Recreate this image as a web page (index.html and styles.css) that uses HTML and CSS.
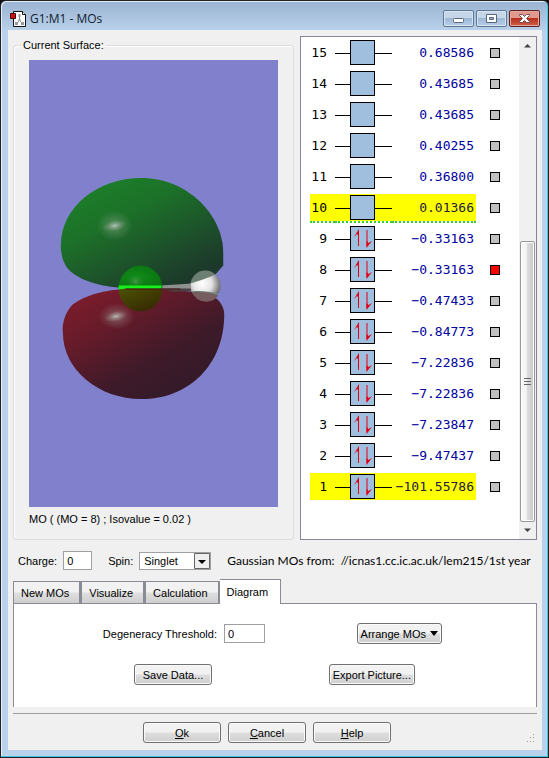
FILE: index.html
```html
<!DOCTYPE html>
<html lang="en">
<head>
    <meta charset="UTF-8">
    <meta name="viewport" content="width=device-width, initial-scale=1.0">
    <title>G1:M1 - MOs</title>
    <link rel="stylesheet" href="styles.css">
</head>
<body>
    <div class="window">
        <header class="titlebar">
            <svg class="app-icon" width="16" height="16" viewBox="0 0 16 16">
                <path d="M3.5 .5h9l3 3v12h-12z" fill="#fff" stroke="#111"/>
                <path d="M12.5 .5v3h3" fill="#fff" stroke="#111"/>
                <path d="M9.500 4v5l-3 4M9.500 9l3 4" fill="none" stroke="#888" stroke-width="1"/>
                <path d="M8.500 3h2v3h-2zM8.500 8h2v2h-2zM5 11h3v3H5zM11 11h3v3h-3z" fill="#999"/>
                <path d="M.5 2.500h5v5h-5z" fill="#d01010" stroke="#400"/>
            </svg>
            <h1>G1:M1 - MOs</h1>
            <div class="window-buttons">
                <button type="button" aria-label="Minimize">
                    <svg width="13" height="13" viewBox="0 0 13 13"><rect x="1.500" y="6.500" width="10" height="4" rx="1" fill="#fff" stroke="#5a6678"/></svg>
                </button>
                <button type="button" aria-label="Maximize">
                    <svg width="13" height="13" viewBox="0 0 13 13"><path fill-rule="evenodd" d="M1.500 2.500h10v8h-10zM4.500 5.500v2h4v-2z" fill="#fff" stroke="#5a6678"/></svg>
                </button>
                <button type="button" class="close" aria-label="Close">
                    <svg width="13" height="13" viewBox="0 0 13 13"><path d="M1.500 2.500h3l2 2 2-2h3v1l-3 3 3 3v1h-3l-2-2-2 2h-3v-1l3-3-3-3z" fill="#fff" stroke="#6d4a55"/></svg>
                </button>
            </div>
        </header>

        <main class="client">
            <div class="main-row">
                <fieldset class="surface">
                    <legend>Current Surface:</legend>
                    <svg class="molecule" viewBox="0 0 250 446" role="img" aria-label="Molecular orbital surface">
                        <defs>
                            <linearGradient id="greenLobe" x1="0.1" y1="0.1" x2="0.75" y2="0.95">
                                <stop offset="0" stop-color="#1c8029"/>
                                <stop offset="0.35" stop-color="#1c7028"/>
                                <stop offset="0.75" stop-color="#1d4d2b"/>
                                <stop offset="1" stop-color="#1c382a"/>
                            </linearGradient>
                            <linearGradient id="redLobe" x1="0.05" y1="0.1" x2="0.7" y2="0.85">
                                <stop offset="0" stop-color="#7c1c2b"/>
                                <stop offset="0.3" stop-color="#681b2a"/>
                                <stop offset="0.75" stop-color="#3f1a29"/>
                                <stop offset="1" stop-color="#361a29"/>
                            </linearGradient>
                            <radialGradient id="shine">
                                <stop offset="0" stop-color="#c4d0c8" stop-opacity="0.75"/>
                                <stop offset="0.4" stop-color="#b0b8b0" stop-opacity="0.35"/>
                                <stop offset="1" stop-color="#b0b8b0" stop-opacity="0"/>
                            </radialGradient>
                            <radialGradient id="hydrogen" gradientUnits="userSpaceOnUse" cx="174" cy="223" r="19">
                                <stop offset="0" stop-color="#fff"/>
                                <stop offset="0.5" stop-color="#e4e4e4"/>
                                <stop offset="1" stop-color="#666"/>
                            </radialGradient>
                            <radialGradient id="atomTop" cx="0.4" cy="0.5" r="0.7">
                                <stop offset="0" stop-color="#128c1a"/>
                                <stop offset="1" stop-color="#08700f"/>
                            </radialGradient>
                            <linearGradient id="atomBottom" x1="0" y1="0" x2="0.8" y2="1">
                                <stop offset="0" stop-color="#4c5205"/>
                                <stop offset="1" stop-color="#352702"/>
                            </linearGradient>
                        </defs>
                        <path fill="url(#greenLobe)" d="M32 184C32 147 68 117 113 117C160 117 195 155 195 192V205L188 213C176 223 150 228 91 227C66 226 46 217 38 207C33 199 32 192 32 184z"/>
                        <ellipse cx="86" cy="165" rx="18" ry="15" fill="url(#shine)" opacity="0.7"/>
                        <ellipse cx="86" cy="165" rx="12" ry="5" fill="url(#shine)" transform="rotate(-12 86 165)"/>
                        <path fill="url(#redLobe)" d="M34 272C33 262 37 252 42 246C52 236 75 230 91 229H144C165 231 180 234 188 238C193 242 196 248 196 254C196 305 160 339 113 339C70 339 34 310 34 272z"/>
                        <ellipse cx="88" cy="256" rx="18" ry="13" fill="url(#shine)" opacity="0.7"/>
                        <ellipse cx="87" cy="256" rx="12" ry="5" fill="url(#shine)" transform="rotate(-12 87 256)"/>
                        <path d="M132 225L164 223V229L132 228z" fill="#8f918f"/>
                        <path d="M132 228L164 228V231H144z" fill="#4c4045"/>
                        <circle cx="177" cy="225" r="15" fill="#6d7f73"/>
                        <path d="M164 232A15 15 0 0 0 190 235C180 232 172 231 164 232z" fill="#755d60"/>
                        <path d="M162 223C172 220 181 217 187 214A15 15 0 0 1 190 233C181 231 172 230 163 231z" fill="url(#hydrogen)"/>
                        <path d="M90 228A22 23 0 0 1 134 228z" fill="url(#atomTop)"/>
                        <path d="M90 228A22 23 0 0 0 134 228z" fill="url(#atomBottom)"/>
                        <ellipse cx="107" cy="221" rx="8" ry="6" fill="url(#shine)" opacity="0.4"/>
                        <path d="M90 225H133V228H97L90 229z" fill="#16f01b"/>
                        <path d="M97 228H152V229H97z" fill="#45120c"/>
                    </svg>
                    <p>MO ( (MO = 8) ; Isovalue = 0.02 )</p>
                </fieldset>

                <section class="diagram">
                    <div class="levels">
                        <table>
                            <tbody id="moRows"></tbody>
                        </table>
                    </div>
                    <div class="scrollbar">
                        <svg width="17" height="17" viewBox="0 0 17 17"><path d="M5 10.500L8.500 7L12 10.500z" fill="#444"/></svg>
                        <div class="track"></div>
                        <div class="thumb">
                            <svg width="7" height="9" viewBox="0 0 7 9"><path d="M0 1.500h7M0 4.500h7M0 7.500h7" stroke="#666"/></svg>
                        </div>
                        <svg width="17" height="17" viewBox="0 0 17 17"><path d="M5 6.500L8.500 10L12 6.500z" fill="#444"/></svg>
                    </div>
                </section>
            </div>

            <div class="info-row">
                <label for="charge">Charge:</label>
                <input type="text" id="charge" value="0">
                <label for="spin" class="spin-label">Spin:</label>
                <select id="spin">
                    <option>Singlet</option>
                    <option>Triplet</option>
                </select>
                <span class="source">Gaussian MOs from:&nbsp; //icnas1.cc.ic.ac.uk/lem215/1st year</span>
            </div>

            <div class="tabs" role="tablist">
                <button type="button" role="tab">New MOs</button>
                <button type="button" role="tab">Visualize</button>
                <button type="button" role="tab">Calculation</button>
                <button type="button" role="tab" class="active" aria-selected="true">Diagram</button>
            </div>
            <div class="tab-panel" role="tabpanel">
                <div class="panel-cell">
                    <label for="threshold">Degeneracy Threshold:</label>
                    <input type="text" id="threshold" value="0">
                </div>
                <div class="panel-cell arrange-cell">
                    <button type="button" class="btn arrange">Arrange MOs
                        <svg width="8" height="5" viewBox="0 0 8 5"><path d="M0 0h8L4 5z" fill="#000"/></svg>
                    </button>
                </div>
                <div class="panel-cell save-cell">
                    <button type="button" class="btn">Save Data...</button>
                </div>
                <div class="panel-cell export-cell">
                    <button type="button" class="btn">Export Picture...</button>
                </div>
            </div>

            <footer class="footer">
                <button type="button" class="btn"><u>O</u>k</button>
                <button type="button" class="btn"><u>C</u>ancel</button>
                <button type="button" class="btn"><u>H</u>elp</button>
                <svg class="grip" width="9" height="9" viewBox="0 0 9 9"><path d="M7 0h1v1H7zM4 3h1v1H4zM7 3h1v1H7zM1 7h1v1H1zM4 7h1v1H4zM7 7h1v1H7z" fill="#999"/></svg>
            </footer>
        </main>
    </div>

    <script>
        const energies = [
            [15, '0.68586'], [14, '0.43685'], [13, '0.43685'], [12, '0.40255'],
            [11, '0.36800'], [10, '0.01366'], [9, '−0.33163'], [8, '−0.33163'],
            [7, '−0.47433'], [6, '−0.84773'], [5, '−7.22836'], [4, '−7.22836'],
            [3, '−7.23847'], [2, '−9.47437'], [1, '−101.55786']
        ];
        const selected = [10, 1];
        const homo = 9;
        const surfaceMo = 8;

        // Up and down spin arrows of a filled orbital
        const electrons = '<path d="M23.500 4V20M32 4V20" stroke="#e00010"/>' +
            '<path d="M24 3V10L22 8L19 11z" fill="#e00010"/>' +
            '<path d="M31.500 22V15L33.500 17L37 15z" fill="#e00010"/>';

        document.getElementById('moRows').innerHTML = energies.map(([mo, energy]) => {
            const classes = [];
            if (selected.includes(mo)) classes.push('selected');
            if (mo === homo + 1) classes.push('lumo');
            return `<tr class="${classes.join(' ')}">
                <td class="number"><label for="mo${mo}">${mo}</label></td>
                <td class="orbital"><svg width="57" height="25" viewBox="0 0 57 25">
                    <path d="M0 13.500H57" stroke="#000"/>
                    <rect x="15.500" y="0.500" width="24" height="24" fill="#a0bfdf" stroke="#000"/>
                    ${mo <= homo ? electrons : ''}
                </svg></td>
                <td class="energy">${energy}</td>
                <td class="check"><input type="checkbox" id="mo${mo}" ${mo === surfaceMo ? 'checked' : ''}></td>
            </tr>`;
        }).join('');
    </script>
</body>
</html>
```
FILE: styles.css
```css
* {
    box-sizing: border-box;
}

body {
    margin: 0;
    background-color: #111;
    font-family: "Liberation Sans", Arial, sans-serif;
    font-size: 11px;
    color: #000;
}

button, input, select {
    font: inherit;
    color: inherit;
    margin: 0;
}

.window {
    display: flex;
    flex-direction: column;
    min-height: 100vh;
    border: 1px solid #222;
    border-radius: 6px 6px 0 0;
    background: linear-gradient(#9ab3d1, #b9d1ea 30px);
    box-shadow: inset -1px -1px #3fc4e4, inset 1px 1px #e4eef8;
    padding: 0 6px 7px 7px;
}

.titlebar {
    display: flex;
    align-items: center;
    height: 29px;
    padding: 6px 2px 0;
}

.titlebar h1 {
    flex: 1;
    margin: 0 4px;
    font-family: "Open Sans", sans-serif;
    font-size: 12px;
    font-weight: normal;
    color: #111c30;
}

.window-buttons {
    display: flex;
    gap: 2px;
}

.window-buttons button {
    display: flex;
    align-items: center;
    justify-content: center;
    width: 31px;
    height: 17px;
    padding: 0;
    border: 1px solid #5f7896;
    border-radius: 2px;
    background: linear-gradient(#c5d6e9 45%, #9db8d6 50%, #b8cfe8);
    box-shadow: inset 0 0 0 1px #d6e4f3;
}

.window-buttons .close {
    border-color: #5e2220;
    background: linear-gradient(#e0998c 45%, #b9301e 50%, #cf604a);
    box-shadow: inset 0 0 0 1px #e6a99f;
}

.client {
    flex: 1;
    display: flex;
    flex-direction: column;
    background-color: #f0f0f0;
    padding: 6px 5px 5px;
}

.main-row {
    display: flex;
    gap: 6px;
    height: 504px;
}

.surface {
    flex: 1;
    display: flex;
    flex-direction: column;
    min-width: 0;
    margin: 0;
    padding: 6px 15px 12px;
    border: 1px solid #dcdcdc;
    border-radius: 3px;
    box-shadow: inset 1px 1px #fff;
}

.surface legend {
    margin-left: -8px;
    padding: 0 2px;
    line-height: 18px;
}

.molecule {
    display: block;
    width: 100%;
    flex: 1;
    min-height: 0;
    background-color: #8080cc;
}

.surface p {
    margin: 4px 0 0;
    line-height: 16px;
}

.diagram {
    display: flex;
    width: 237px;
    border: 1px solid #828790;
    background-color: #fff;
}

.levels {
    flex: 1;
    padding-left: 9px;
}

.levels table {
    border-spacing: 0;
    font-family: "DejaVu Sans Mono", "Liberation Mono", monospace;
    font-size: 13px;
}

.levels td {
    height: 31px;
    padding: 0;
    border-top: 2px solid transparent;
    border-bottom: 2px solid transparent;
    background-clip: padding-box;
    white-space: nowrap;
    line-height: 16px;
}

.levels .number {
    width: 25px;
    padding-right: 8px;
    text-align: right;
}

.levels .orbital svg {
    display: block;
}

.levels .energy {
    width: 84px;
    padding-right: 2px;
    text-align: right;
    color: #0000a0;
}

.levels .selected td:not(.check) {
    background-color: #ff0;
}

.levels .selected .energy {
    color: #202040;
}

.levels .lumo td:not(.check) {
    border-bottom: 2px dotted #3c3;
}

.levels .check {
    padding-left: 14px;
}

.levels input {
    display: block;
    appearance: none;
    width: 10px;
    height: 10px;
    border: 1px solid #000;
    background-color: #c0c0c0;
}

.levels input:checked {
    background-color: #f00;
}

.scrollbar {
    display: flex;
    flex-direction: column;
    width: 17px;
    background-color: #f0f0f0;
}

.scrollbar .track {
    flex: 188;
}

.scrollbar .thumb {
    flex: 280;
    display: flex;
    align-items: center;
    justify-content: center;
    margin: 0 1px;
    border: 1px solid #979797;
    border-radius: 2px;
    background: linear-gradient(to right, #f5f5f5 40%, #dcdcdc 50%, #c8c8cc);
    box-shadow: inset 0 0 0 1px #fff;
}

.info-row {
    display: flex;
    align-items: center;
    margin-top: 11px;
    padding-left: 5px;
    height: 19px;
    white-space: nowrap;
}

.info-row input, .panel-cell input {
    height: 19px;
    padding: 0 3px;
    border: 1px solid #a0a0a4;
    border-radius: 0;
    background-color: #fff;
}

.info-row input {
    width: 29px;
    margin-left: 6px;
}

.spin-label {
    margin-left: 16px;
}

.info-row select {
    appearance: none;
    width: 72px;
    height: 18px;
    margin-left: 6px;
    padding: 0 4px;
    border: 1px solid #a0a0a4;
    border-radius: 0;
    background: url("data:image/svg+xml,%3Csvg xmlns='http://www.w3.org/2000/svg' width='16' height='16'%3E%3Cpath d='M.5.5h15v15H.5z' fill='%23eee' stroke='%23666'/%3E%3Cpath d='M4 7h8l-4 4z'/%3E%3C/svg%3E") no-repeat right center #fff;
}

.source {
    margin-left: 16px;
    font-family: Lato, "Open Sans", sans-serif;
    font-size: 12px;
}

.tabs {
    display: flex;
    align-items: flex-end;
    height: 25px;
    margin-top: 8px;
}

.tabs button {
    height: 22px;
    padding: 0 10px 0 7px;
    border: 1px solid #898c95;
    border-bottom: none;
    border-right-width: 2px;
    background: linear-gradient(#f2f2f2 45%, #dedede 55%, #cfcfcf);
}

.tabs .active {
    height: 25px;
    padding-right: 12px;
    border-left-width: 0;
    border-right-width: 1px;
    background: #fff;
    z-index: 1;
    margin-bottom: -1px;
}

.tab-panel {
    display: grid;
    grid-template-columns: 1fr 1fr;
    row-gap: 20px;
    padding: 19px 0 22px;
    border: 1px solid #898c95;
    border-bottom: none;
    background-color: #fff;
}

.panel-cell {
    display: flex;
    align-items: center;
    justify-content: flex-end;
    gap: 7px;
    padding-right: 10px;
}

.arrange-cell {
    padding-right: 94px;
}

.save-cell {
    padding-right: 63px;
}

.export-cell {
    padding-right: 121px;
}

.panel-cell input {
    width: 41px;
}

.btn {
    height: 21px;
    min-width: 78px;
    padding: 0 3px;
    border: 1px solid #707070;
    border-radius: 3px;
    background: linear-gradient(#f2f2f2 45%, #dddddd 55%, #cfcfcf);
    box-shadow: inset 0 0 0 1px #fafafa;
    white-space: nowrap;
}

.arrange {
    display: flex;
    align-items: center;
    justify-content: center;
    gap: 4px;
}

.footer {
    display: flex;
    justify-content: center;
    gap: 7px;
    margin-top: 6px;
    padding-top: 8px;
    padding-right: 16px;
    border-top: 1px solid #a0a0a0;
    position: relative;
}

.grip {
    position: absolute;
    right: 2px;
    bottom: 0;
}
```
